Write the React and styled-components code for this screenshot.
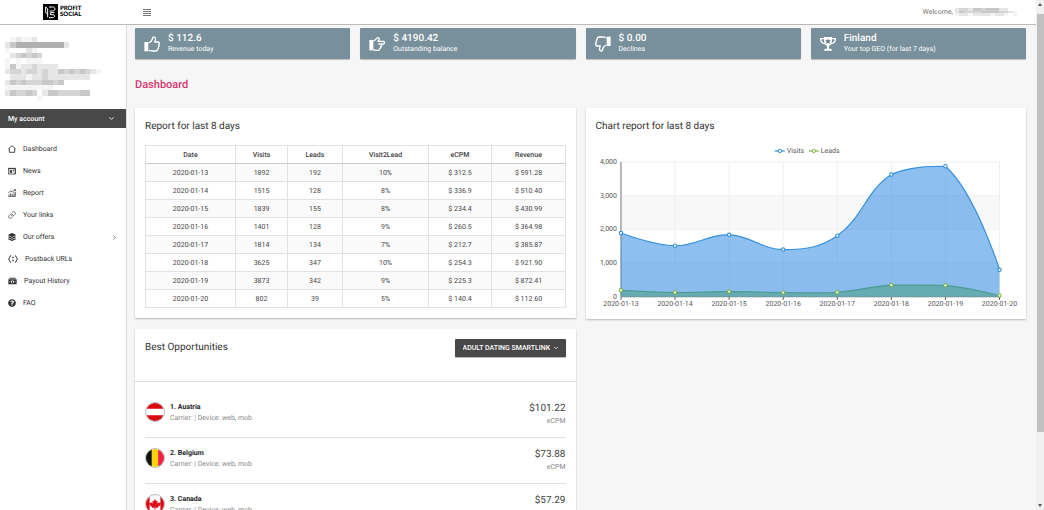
import React from 'react'
import styled, { createGlobalStyle } from 'styled-components'
import { FaLayerGroup, FaQuestionCircle } from 'react-icons/fa'
import { FiChevronDown, FiChevronRight, FiLink } from 'react-icons/fi'

const reportRows = [
    { date: '2020-01-13', visits: 1892, leads: 192, ratio: '10%', ecpm: '312.5', revenue: '591.28' },
    { date: '2020-01-14', visits: 1515, leads: 128, ratio: '8%', ecpm: '336.9', revenue: '510.40' },
    { date: '2020-01-15', visits: 1839, leads: 155, ratio: '8%', ecpm: '234.4', revenue: '430.99' },
    { date: '2020-01-16', visits: 1401, leads: 128, ratio: '9%', ecpm: '260.5', revenue: '364.98' },
    { date: '2020-01-17', visits: 1814, leads: 134, ratio: '7%', ecpm: '212.7', revenue: '385.87' },
    { date: '2020-01-18', visits: 3625, leads: 347, ratio: '10%', ecpm: '254.3', revenue: '921.90' },
    { date: '2020-01-19', visits: 3873, leads: 342, ratio: '9%', ecpm: '225.3', revenue: '872.41' },
    { date: '2020-01-20', visits: 802, leads: 39, ratio: '5%', ecpm: '140.4', revenue: '112.60' },
];

/* ---------- icons ---------- */

const ThumbIcon = ({ down }) => (
    <svg width="16" height="16" viewBox="0 0 48 48" aria-hidden="true">
        <g transform={down ? 'rotate(180 24 24)' : undefined}>
            <path d="M1 18h12v28H1z" fill="#fff" />
            <path d="M14 21c5-2 10-7 11-12 1-5 3-7 6-6 5 2 4 8 1 15h10c5 0 5 6 2 8 2 2 2 5-1 7 1 3 0 5-2 6 0 4-2 6-6 6H24c-4 0-6-2-10-2" fill="none" stroke="#fff" strokeWidth="4" strokeLinejoin="round" />
        </g>
    </svg>
)

const PointIcon = () => (
    <svg width="16" height="16" viewBox="0 0 48 48" aria-hidden="true">
        <path d="M1 12h12v31H1z" fill="#fff" />
        <path d="M13 15c6-1 8-6 11-9 4-3 8 0 6 5l-3 5h16c5 0 5 8 0 8H28M36 24c4 2 3 7-1 8 1 4-1 6-3 6 0 4-2 5-5 5h-5c-3 0-5-1-9-1" fill="none" stroke="#fff" strokeWidth="4" strokeLinejoin="round" />
    </svg>
)

const TrophyIcon = () => (
    <svg width="16" height="16" viewBox="0 0 48 48" aria-hidden="true">
        <path d="M12 3h24v10c0 9-4 15-9 17v8h5c2 0 4 2 4 6H12c0-4 2-6 4-6h5v-8c-5-2-9-8-9-17z" fill="#fff" />
        <path d="M12 8H2c0 10 5 14 13 15M36 8h10c0 10-5 14-13 15" fill="none" stroke="#fff" strokeWidth="4" />
        <path d="M24 7l2 6h7l-5 4 2 7-6-4-6 4 2-7-5-4h7z" fill="#607b88" />
    </svg>
)

const HomeIcon = () => (
    <svg width="8" height="8" viewBox="0 0 24 24" aria-hidden="true">
        <path d="M1 12L12 2l11 10M4 10v12h16V10" fill="none" stroke="currentColor" strokeWidth="2.6" />
    </svg>
)

const NewsIcon = () => (
    <svg width="8" height="8" viewBox="0 0 24 24" aria-hidden="true">
        <path d="M1 4h22v17H1z" fill="none" stroke="currentColor" strokeWidth="2.4" />
        <path d="M1 4h22v3H1zM5 10h7v7H5zM14 10h4v2h-4zM14 14h4v2h-4zM20 5h3v15h-3z" fill="currentColor" />
    </svg>
)

const ReportIcon = () => (
    <svg width="8" height="8" viewBox="0 0 24 24" aria-hidden="true">
        <path d="M1 11l7-5 5 3 9-7M17 2h5v5M1 22h22M3 22v-6M8 22V12M13 22v-7M18 22V10M22 22V9" fill="none" stroke="currentColor" strokeWidth="2.2" />
    </svg>
)

const PostbackIcon = () => (
    <svg width="10" height="8" viewBox="0 0 30 24" aria-hidden="true">
        <path d="M9 2C3 2 7 11 1 12c6 1 2 10 8 10M21 2c6 0 2 9 8 10-6 1-2 10-8 10" fill="none" stroke="currentColor" strokeWidth="3" />
        <path d="M13 5h4v5h-4zM13 14h4v5h-4z" fill="currentColor" />
    </svg>
)

const PayoutIcon = () => (
    <svg width="9" height="8" viewBox="0 0 27 24" aria-hidden="true">
        <path d="M4 2h19v3H4zM1 7h25v15H1z" fill="currentColor" />
        <circle cx="13.5" cy="14.5" r="4.6" fill="#fff" />
        <path d="M12 11h3v7h-3z" fill="currentColor" />
        <path d="M4 14h3M20 14h3" stroke="#fff" strokeWidth="2" />
    </svg>
)

const LogoMark = () => (
    <svg width="15" height="16" viewBox="0 0 45 48" aria-hidden="true">
        <path d="M0 0h45v48H0z" fill="#000" />
        <path d="M8 9l6 5v26M8 9v17l6 4M18 9h11c9 0 9 12 0 12h-9M34 26H22v6h8c7 0 6 9-1 9H18" fill="none" stroke="#fff" strokeWidth="3" />
    </svg>
)

/* one character per cell, a = lightest, e = darkest */
const userMask = [
    ' abaab            ',
    'bdeeeeeeeeeb      ',
    'a   ba            ',
    ' bcdcdc           ',
    'a a aaa           ',
    'adabbcbbbb        ',
    'bccbccbcbbdcdcdcba',
    ' bbbabbcbbbbbbbb  ',
    'bdcdcccddcd       ',
    'aaaaaaaaa         ',
    'bdccdc bddccccdd  ',
    '      a           ',
];
const nameMask = ['bccbddcdddbb  ', 'bdccccddddccba', 'abbabbbbabba a'];
const shades = { a: '#f5f5f5', b: '#e6e6e6', c: '#d5d5d5', d: '#c8c8c8', e: '#b0b0b0' };

const Mosaic = ({ cells, width, height, label }) => (
    <svg width={width} height={height} viewBox={`0 0 ${cells[0].length} ${cells.length}`} preserveAspectRatio="none" shapeRendering="crispEdges" role="img" aria-label={label}>
        {cells.map((row, y) => [...row].map((c, x) => c === ' ' ? null : (
            <rect key={`${x}-${y}`} x={x} y={y} width="1" height="1" fill={shades[c]} />
        )))}
    </svg>
)

/* ---------- chart ---------- */

const TOP = 17;
const BOTTOM = 152;
const LEFT = 25;
const RIGHT = 404;
const SMOOTH = 0.4;

const xAt = (i) => LEFT + i * (RIGHT - LEFT) / (reportRows.length - 1);
const yAt = (v) => BOTTOM - v / 4000 * (BOTTOM - TOP);

const smoothLine = (pts) => {
    const ys = pts.map(p => p[1]);
    const clamp = (y) => Math.min(Math.max(...ys), Math.max(Math.min(...ys), y));
    const dist = (a, b) => Math.hypot(a[0] - b[0], a[1] - b[1]);
    const handles = pts.map((p, i) => {
        const prev = pts[i - 1];
        const next = pts[i + 1];
        if (!prev || !next) return [p, p];
        const ratio = dist(p, next) / (dist(p, next) + dist(p, prev));
        const v = [(next[0] - prev[0]) * SMOOTH, (next[1] - prev[1]) * SMOOTH];
        return [
            [p[0] - v[0] * (1 - ratio), clamp(p[1] - v[1] * (1 - ratio))],
            [p[0] + v[0] * ratio, clamp(p[1] + v[1] * ratio)],
        ];
    });
    return pts.slice(1).reduce(
        (d, p, i) => `${d} C${handles[i][1]} ${handles[i + 1][0]} ${p}`,
        `M${pts[0]}`
    );
}

const Series = ({ field, color, fill }) => {
    const pts = reportRows.map((r, i) => [xAt(i), yAt(r[field])]);
    const line = smoothLine(pts);
    return (
        <g>
            <path d={`${line} L${RIGHT} ${BOTTOM} L${LEFT} ${BOTTOM} Z`} fill={fill} fillOpacity="0.55" />
            <path d={line} fill="none" stroke={color} strokeWidth="1.2" />
        </g>
    )
}

const Dots = ({ field, color }) => reportRows.map((r, i) => (
    <circle key={r.date} cx={xAt(i)} cy={yAt(r[field])} r="1.7" fill="#fff" stroke={color} strokeWidth="1.1" />
))

const Chart = () => (
    <ChartSvg viewBox="0 0 421 164" role="img" aria-label="Visits and leads by day">
        <path d="M179 6h10" stroke="#2f86d6" strokeWidth="1.2" />
        <circle cx="184" cy="6" r="1.7" fill="#fff" stroke="#2f86d6" />
        <text x="191" y="8">Visits</text>
        <path d="M213 6h10" stroke="#7cb342" strokeWidth="1.2" />
        <circle cx="218" cy="6" r="1.7" fill="#fff" stroke="#7cb342" />
        <text x="225" y="8">Leads</text>
        {[3000, 1000].map(v => (
            <rect key={v} x={LEFT} y={yAt(v)} width={RIGHT - LEFT} height={yAt(0) - yAt(1000)} fill="#f8f8f8" />
        ))}
        {[4000, 3000, 2000, 1000, 0].map(v => (
            <g key={v}>
                <path d={`M${LEFT} ${yAt(v)}H${RIGHT}`} stroke="#f0f0f0" />
                <text x="21" y={yAt(v) + 2} textAnchor="end">{v.toLocaleString('en-US')}</text>
            </g>
        ))}
        {reportRows.map((r, i) => (
            <g key={r.date}>
                <path d={`M${xAt(i)} ${TOP}V${BOTTOM}`} stroke="#f0f0f0" />
                <path d={`M${xAt(i)} ${BOTTOM}v3`} stroke="#555" />
                <text x={xAt(i)} y="161" textAnchor="middle">{r.date}</text>
            </g>
        ))}
        <path d={`M${LEFT} ${TOP}V${BOTTOM}`} stroke="#777" />
        <path d={`M${LEFT} ${BOTTOM}H${RIGHT}`} stroke="#999" />
        <Series field="visits" color="#3490dc" fill="#2f8de4" />
        <Series field="leads" color="#4a9c93" fill="#4a9c82" />
        <Dots field="visits" color="#3490dc" />
        <Dots field="leads" color="#7cb342" />
    </ChartSvg>
)

/* ---------- flags ---------- */

const Flag = ({ country }) => (
    <FlagSvg viewBox="0 0 40 40" role="img" aria-label={`Flag of ${country}`}>
        {country === 'Austria' && <path d="M0 0h40v13H0zM0 27h40v13H0z" fill="#d80b12" />}
        {country === 'Belgium' && (
            <>
                <path d="M0 0h13v40H0z" fill="#111" />
                <path d="M13 0h14v40H13z" fill="#fdd20a" />
                <path d="M27 0h13v40H27z" fill="#ef2340" />
            </>
        )}
        {country === 'Canada' && (
            <>
                <path d="M0 0h8v40H0zM32 0h8v40h-8z" fill="#d80b12" />
                <path d="M20 9l3 5 3-1-1 6 4-3 1 2 3 0-1 4-6 5 0 2-5-1v5h-2v-5l-5 1 0-2-6-5-1-4 3 0 1-2 4 3-1-6 3 1z" fill="#e0101a" />
            </>
        )}
    </FlagSvg>
)

/* ---------- page ---------- */

const stats = [
    { icon: <ThumbIcon />, value: '$ 112.6', label: 'Revenue today' },
    { icon: <PointIcon />, value: '$ 4190.42', label: 'Outstanding balance' },
    { icon: <ThumbIcon down />, value: '$ 0.00', label: 'Declines' },
    { icon: <TrophyIcon />, value: 'Finland', label: 'Your top GEO (for last 7 days)' },
];

const navItems = [
    { icon: <HomeIcon />, text: 'Dashboard' },
    { icon: <NewsIcon />, text: 'News' },
    { icon: <ReportIcon />, text: 'Report' },
    { icon: <FiLink size={8} />, text: 'Your links' },
    { icon: <FaLayerGroup size={8} />, text: 'Our offers', more: true },
    { icon: <PostbackIcon />, text: 'Postback URLs' },
    { icon: <PayoutIcon />, text: 'Payout History' },
    { icon: <FaQuestionCircle size={8} />, text: 'FAQ' },
];

const opportunities = [
    { country: 'Austria', price: '$101.22' },
    { country: 'Belgium', price: '$73.88' },
    { country: 'Canada', price: '$57.29' },
];

const App = () => {
    return (
        <Screen>
            <GlobalStyle />
            <Page>
                <Header>
                    <Logo href="#home">
                        <LogoMark />
                        <LogoText><span>PROFIT</span><span>SOCIAL</span></LogoText>
                    </Logo>
                    <MenuButton aria-label="Toggle menu"><i /><i /><i /><i /></MenuButton>
                    <Welcome>
                        Welcome, <Mosaic cells={nameMask} width={62} height={8} label="User name" />
                    </Welcome>
                </Header>
                <Body>
                    <Sidebar>
                        <UserBox>
                            <Mosaic cells={userMask} width={96} height={64} label="User details" />
                        </UserBox>
                        <AccountButton>My account <FiChevronDown size={7} strokeWidth={3} /></AccountButton>
                        <Nav>
                            {navItems.map(item => (
                                <NavLink key={item.text} href="#nav">
                                    {item.icon}
                                    <span>{item.text}</span>
                                    {item.more && <FiChevronRight size={7} />}
                                </NavLink>
                            ))}
                        </Nav>
                    </Sidebar>
                    <Main>
                        <Stats>
                            {stats.map(s => (
                                <Stat key={s.label}>
                                    {s.icon}
                                    <div>
                                        <StatValue>{s.value}</StatValue>
                                        <StatLabel>{s.label}</StatLabel>
                                    </div>
                                </Stat>
                            ))}
                        </Stats>
                        <PageTitle>Dashboard</PageTitle>
                        <Columns>
                            <Column>
                                <Panel>
                                    <PanelTitle>Report for last 8 days</PanelTitle>
                                    <Table>
                                        <colgroup>
                                            <Col $w={90} /><Col $w={52} /><Col $w={55} /><Col $w={86} /><Col $w={63} /><Col $w={74} />
                                        </colgroup>
                                        <thead>
                                            <tr><th>Date</th><th>Visits</th><th>Leads</th><th>Visit2Lead</th><th>eCPM</th><th>Revenue</th></tr>
                                        </thead>
                                        <tbody>
                                            {reportRows.map(r => (
                                                <tr key={r.date}>
                                                    <td>{r.date}</td>
                                                    <td>{r.visits}</td>
                                                    <td>{r.leads}</td>
                                                    <td>{r.ratio}</td>
                                                    <td>$ {r.ecpm}</td>
                                                    <td>$ {r.revenue}</td>
                                                </tr>
                                            ))}
                                        </tbody>
                                    </Table>
                                </Panel>
                                <Panel>
                                    <OppHeader>
                                        <PanelTitle>Best Opportunities</PanelTitle>
                                        <SelectWrap>
                                            <Select aria-label="Offer type">
                                                <option>ADULT DATING SMARTLINK</option>
                                            </Select>
                                            <FiChevronDown size={6} strokeWidth={3} />
                                        </SelectWrap>
                                    </OppHeader>
                                    <OppList>
                                        {opportunities.map((o, i) => (
                                            <OppItem key={o.country}>
                                                <Flag country={o.country} />
                                                <OppInfo>
                                                    <OppName>{i + 1}. {o.country}</OppName>
                                                    <OppNote>Carrier: | Device: web, mob</OppNote>
                                                </OppInfo>
                                                <OppRate>
                                                    <OppPrice>{o.price}</OppPrice>
                                                    <OppNote>eCPM</OppNote>
                                                </OppRate>
                                            </OppItem>
                                        ))}
                                    </OppList>
                                </Panel>
                            </Column>
                            <Column>
                                <Panel>
                                    <PanelTitle>Chart report for last 8 days</PanelTitle>
                                    <Chart />
                                </Panel>
                            </Column>
                        </Columns>
                    </Main>
                </Body>
            </Page>
            <ScrollBar aria-hidden="true">
                <Arrow $up />
                <Thumb />
                <Arrow />
            </ScrollBar>
        </Screen>
    )
}

export default App;


const GlobalStyle = createGlobalStyle`
    * {
        box-sizing: border-box;
    }
    body {
        margin: 0;
        background: #f6f6f6;
        color: #444;
        font-family: Roboto, "Liberation Sans", sans-serif;
        font-size: 7px;
        text-rendering: geometricPrecision;
    }
    svg {
        display: block;
        flex-shrink: 0;
    }
    button, select {
        font-family: inherit;
        text-rendering: inherit;
        border: 0;
        cursor: pointer;
    }
    a {
        color: inherit;
        text-decoration: none;
    }
`

const Screen = styled.div`
    display: flex;
    height: 100vh;
    overflow: hidden;
`

const Page = styled.div`
    display: flex;
    flex-direction: column;
    flex: 1;
    min-width: 0;
`

const Header = styled.header`
    display: flex;
    align-items: center;
    flex-shrink: 0;
    height: 25px;
    padding: 0 19px 0 43px;
    background: #fff;
    border-bottom: 1px solid #bbb;
`

const Logo = styled.a`
    display: flex;
    align-items: center;
    gap: 2px;
    width: 100px;
    color: #000;
`

const LogoText = styled.span`
    display: flex;
    flex-direction: column;
    font-family: Lato, sans-serif;
    font-size: 6px;
    font-weight: 900;
    line-height: 6px;
`

const MenuButton = styled.button`
    display: flex;
    flex-direction: column;
    gap: 1px;
    width: 8px;
    padding: 0;
    background: none;

    i {
        height: 1px;
        background: #777;
    }
`

const Welcome = styled.div`
    display: flex;
    align-items: center;
    gap: 2px;
    margin-left: auto;
    color: #777;
`

const Body = styled.div`
    display: flex;
    flex: 1;
    min-height: 0;
`

const Sidebar = styled.aside`
    flex-shrink: 0;
    width: 127px;
    background: #fff;
    border-right: 1px solid #ddd;
`

const UserBox = styled.div`
    height: 84px;
    padding: 12px 5px 0;
`

const AccountButton = styled.button`
    display: flex;
    justify-content: space-between;
    align-items: center;
    width: 100%;
    height: 19px;
    padding: 0 11px 0 8px;
    background: #484848;
    color: #fff;
    font-size: 7px;
    font-weight: 500;
`

const Nav = styled.nav`
    padding: 10px 8px;
`

const NavLink = styled.a`
    display: flex;
    align-items: center;
    gap: 7px;
    height: 22px;
    color: #333;

    span {
        flex: 1;
    }
`

const Main = styled.main`
    flex: 1;
    min-width: 0;
    padding: 3px 10px 0 8px;
    overflow: hidden;
`

const Stats = styled.section`
    display: grid;
    grid-template-columns: repeat(4, 1fr);
    gap: 10px;
`

const Stat = styled.div`
    display: flex;
    align-items: center;
    gap: 8px;
    height: 31px;
    padding: 0 9px;
    background: #78909c;
    border-radius: 1px;
    box-shadow: 0 1px 1px rgba(0, 0, 0, 0.25);
    color: #fff;
`

const StatValue = styled.div`
    font-size: 10px;
    font-weight: 500;
    line-height: 12px;
`

const StatLabel = styled.div`
    line-height: 9px;
`

const PageTitle = styled.h1`
    margin: 0;
    padding: 18px 0 16px;
    color: #d8346f;
    font-size: 11px;
    font-weight: 500;
    line-height: 15px;
`

const Columns = styled.div`
    display: grid;
    grid-template-columns: 1fr 1fr;
    align-items: start;
    gap: 10px;
`

const Column = styled.div`
    display: flex;
    flex-direction: column;
    gap: 11px;
    min-width: 0;
`

const Panel = styled.section`
    padding: 0 10px 10px;
    background: #fff;
    border-radius: 1px;
    box-shadow: 0 1px 2px rgba(0, 0, 0, 0.25);
`

const PanelTitle = styled.h2`
    margin: 0;
    color: #333;
    font-size: 10px;
    font-weight: 400;
    line-height: 37px;
`

const Table = styled.table`
    width: 100%;
    table-layout: fixed;
    border-collapse: collapse;
    text-align: center;

    th, td {
        height: 18px;
        padding: 0;
        border: 1px solid #e2e2e2;
    }
    th {
        border-bottom-color: #ccc;
        font-weight: 500;
    }
    tbody tr:nth-child(odd) {
        background: #fafafa;
    }
`

const Col = styled.col`
    width: ${props => props.$w}px;
`

const ChartSvg = styled.svg`
    width: 100%;
    height: auto;
    overflow: visible;

    text {
        fill: #555;
        font-size: 7px;
    }
`

const OppHeader = styled.div`
    display: flex;
    justify-content: space-between;
    align-items: flex-start;
    height: 53px;
    margin: 0 -10px;
    padding: 0 10px;
    border-bottom: 1px solid #ddd;
`

const SelectWrap = styled.div`
    position: relative;
    margin-top: 10px;
    color: #fff;

    svg {
        position: absolute;
        top: 6px;
        right: 7px;
        pointer-events: none;
    }
`

const Select = styled.select`
    appearance: none;
    width: 111px;
    height: 18px;
    padding: 0 8px;
    background: #484848;
    border-radius: 1px;
    box-shadow: 0 1px 1px rgba(0, 0, 0, 0.3);
    color: #fff;
    font-size: 7px;
    font-weight: 500;
`

const OppList = styled.ul`
    margin: 0;
    padding: 10px 0 0;
    list-style: none;
`

const OppItem = styled.li`
    display: flex;
    align-items: flex-start;
    gap: 5px;
    height: 46px;
    padding-top: 10px;
    border-bottom: 1px solid #e2e2e2;
`

const FlagSvg = styled.svg`
    width: 20px;
    height: 20px;
    background: #fff;
    border: 1px solid #bbb;
    border-radius: 50%;
`

const OppInfo = styled.div`
    flex: 1;
`

const OppName = styled.div`
    color: #222;
    font-weight: 700;
    line-height: 11px;
`

const OppNote = styled.div`
    color: #888;
    line-height: 11px;
`

const OppRate = styled.div`
    text-align: right;
`

const OppPrice = styled.div`
    font-size: 10px;
    line-height: 14px;
`

const ScrollBar = styled.div`
    display: flex;
    flex-direction: column;
    align-items: center;
    flex-shrink: 0;
    width: 8px;
    padding: 3px 0;
    background: #f1f1f1;
`

const Arrow = styled.i`
    border: 2px solid transparent;
    border-top: ${props => props.$up ? '0' : '3px solid #555'};
    border-bottom: ${props => props.$up ? '3px solid #555' : '0'};
`

const Thumb = styled.div`
    width: 7px;
    height: 83%;
    margin: 8px 0 auto;
    background: #c1c1c1;
`
